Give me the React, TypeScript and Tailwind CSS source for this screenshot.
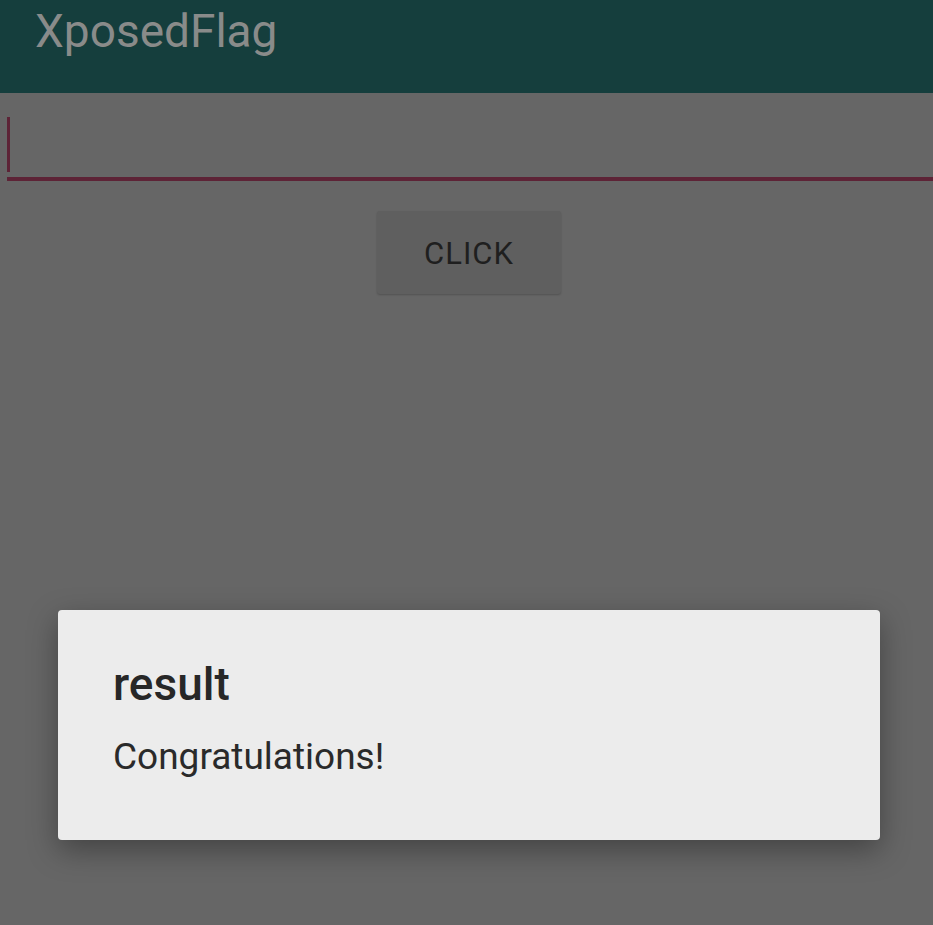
import React from 'react';

function App() {
  return (
    <div
      className="relative w-[933px] h-[925px] overflow-hidden bg-[#666666]"
      style={{ fontFamily: 'Roboto, "Noto Sans", sans-serif' }}
    >
      {/* app bar */}
      <div className="h-[93px] bg-[#153e3d] flex items-start pl-[35px] pt-[6px]">
        <span className="text-[46px] leading-[50px] text-[#898b8a]">XposedFlag</span>
      </div>

      {/* text field */}
      <div className="px-[7px] pt-[24px]">
        <div className="h-[60px] flex items-start">
          <div className="w-[3px] h-[55px] bg-[#5d2336]" />
        </div>
        <div className="h-[4px] bg-[#5d2336] mr-[-7px]" />
      </div>

      {/* button */}
      <div className="flex justify-center pt-[30px] pl-[5px]">
        <div className="w-[184px] h-[83px] rounded-[3px] bg-[#5f5f5f] shadow-[0_1px_2px_rgba(0,0,0,0.2)] flex items-center justify-center pt-[3px]">
          <span className="text-[31px] tracking-[1px] text-[#1f1f1f]">CLICK</span>
        </div>
      </div>

      {/* dialog over the dimmed page */}
      <div className="absolute inset-0 flex items-start justify-center pt-[610px] pl-[5px]">
        <div className="w-[822px] h-[230px] rounded-[4px] bg-[#ececec] shadow-[0_10px_30px_rgba(0,0,0,0.35)] px-[55px] pt-[48px]">
          <div className="text-[46px] leading-[52px] font-medium text-[#272727]">result</div>
          <div className="mt-[27px] text-[37px] leading-[40px] text-[#2a2a2a]">Congratulations!</div>
        </div>
      </div>
    </div>
  );
}

export default App;
